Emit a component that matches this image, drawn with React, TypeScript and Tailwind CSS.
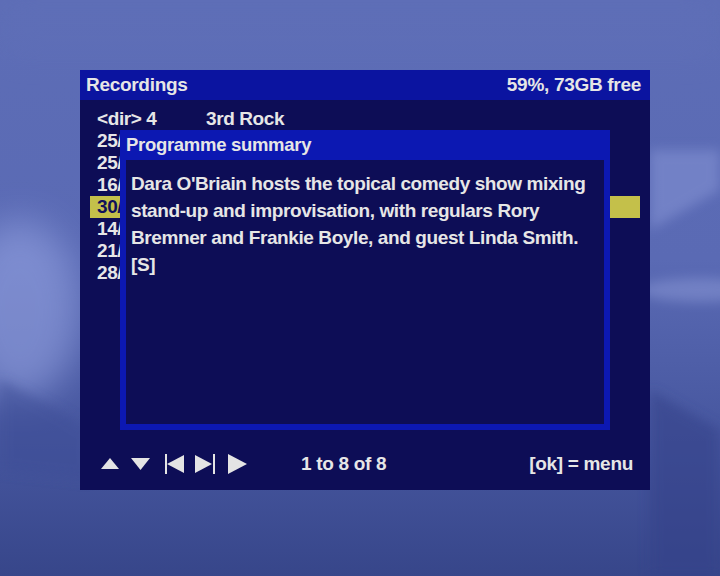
import React from "react";

const rows = [
  { date: "<dir> 4", title: "3rd Rock" },
  { date: "25/", title: "" },
  { date: "25/", title: "" },
  { date: "16/", title: "" },
  { date: "30/", title: "", sel: true },
  { date: "14/", title: "" },
  { date: "21/", title: "" },
  { date: "28/", title: "" },
];

function Wallpaper() {
  return (
    <svg className="absolute inset-0" width="720" height="576" viewBox="0 0 720 576">
      <defs>
        <linearGradient id="bg" x1="0" y1="0" x2="0" y2="1">
          <stop offset="0" stopColor="#5d6db6" />
          <stop offset="0.45" stopColor="#5a6ab4" />
          <stop offset="0.8" stopColor="#44549c" />
          <stop offset="1" stopColor="#37468a" />
        </linearGradient>
        <filter id="blur" x="-50%" y="-50%" width="200%" height="200%">
          <feGaussianBlur stdDeviation="18" />
        </filter>
        <filter id="blur2" x="-50%" y="-50%" width="200%" height="200%">
          <feGaussianBlur stdDeviation="6" />
        </filter>
      </defs>
      <rect width="720" height="576" fill="url(#bg)" />
      <ellipse cx="20" cy="310" rx="60" ry="90" fill="#9aa8e6" opacity="0.55" filter="url(#blur)" />
      <path d="M0 380 Q 60 410 90 430 L 90 480 L 0 470 Z" fill="#3e4e96" opacity="0.5" filter="url(#blur2)" />
      <path d="M650 230 L 720 190 L 720 150 L 650 150 Z" fill="#8a98d8" opacity="0.5" filter="url(#blur2)" />
      <ellipse cx="700" cy="290" rx="60" ry="12" fill="#a4b0e8" opacity="0.35" filter="url(#blur2)" />
      <path d="M650 390 L 720 430 L 720 576 L 650 576 Z" fill="#34438a" opacity="0.6" filter="url(#blur2)" />
      <path d="M0 0 L 720 0 L 720 60 L 0 60 Z" fill="#6272ba" opacity="0.3" filter="url(#blur)" />
    </svg>
  );
}

function Icons() {
  return (
    <svg width="150" height="22" viewBox="0 0 150 22" className="block">
      <polygon points="10,5 19,16 1,16" fill="#e4e4e4" />
      <polygon points="31,5 50,5 40.5,17" fill="#e4e4e4" />
      <rect x="65" y="1" width="2" height="20" fill="#e4e4e4" />
      <polygon points="67,11 84,2 84,20" fill="#e4e4e4" />
      <polygon points="95,2 112,11 95,20" fill="#e4e4e4" />
      <rect x="113" y="1" width="2" height="20" fill="#e4e4e4" />
      <polygon points="128,1 147,11 128,21" fill="#e4e4e4" />
    </svg>
  );
}

export default function App() {
  return (
    <div
      className="relative w-[720px] h-[576px] overflow-hidden"
      style={{ fontFamily: '"Liberation Sans", Arial, sans-serif' }}
    >
      <Wallpaper />
      <div className="relative pt-[70px] pl-[80px]">
        <div className="relative w-[570px] h-[420px] bg-[#0d0d56] flex flex-col text-[#e6e6e6] font-bold">
          <div className="h-[30px] bg-[#0b14a0] flex items-center justify-between pl-[6px] pr-[9px] text-[19px] tracking-[-0.3px]">
            <span>Recordings</span>
            <span>59%, 73GB free</span>
          </div>
          <div className="pt-[8px] flex-1 text-[19px] tracking-[-0.4px]">
            {rows.map((r, i) => (
              <div
                key={i}
                className={
                  "ml-[10px] w-[550px] h-[22px] flex items-center pl-[7px] " +
                  (r.sel ? "bg-[#c4c04a] text-[#10105a]" : "")
                }
              >
                <span className="w-[109px]">{r.date}</span>
                {r.title ? <span>{r.title}</span> : null}
              </div>
            ))}
          </div>
          <div className="h-[30px] mb-[11px] flex items-center pl-[20px] pr-[17px] text-[19px] tracking-[-0.3px]">
            <Icons />
            <span className="ml-[51px]">1 to 8 of 8</span>
            <span className="ml-auto">[ok] = menu</span>
          </div>

          <div className="absolute left-[40px] top-[60px] w-[490px] h-[300px] bg-[#0c18b2] flex flex-col px-[6px] pb-[6px]">
            <div className="h-[30px] flex items-center text-[18.5px] tracking-[-0.3px]">Programme summary</div>
            <div className="flex-1 bg-[#0d0d56] pl-[5px] pt-[10px] text-[19px] leading-[27px] tracking-[-0.4px] whitespace-nowrap">
              <div>Dara O'Briain hosts the topical comedy show mixing</div>
              <div>stand-up and improvisation, with regulars Rory</div>
              <div>Bremner and Frankie Boyle, and guest Linda Smith.</div>
              <div>[S]</div>
            </div>
          </div>
        </div>
      </div>
    </div>
  );
}
